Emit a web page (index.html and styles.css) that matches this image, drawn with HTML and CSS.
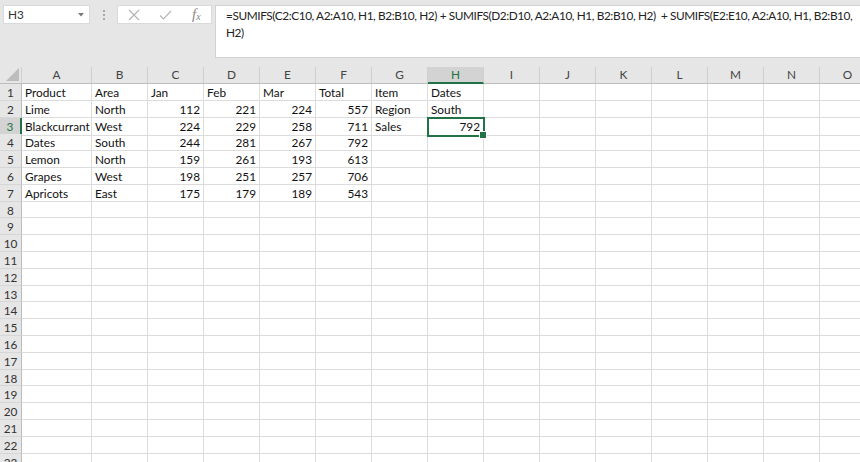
FILE: index.html
```html
<!DOCTYPE html>
<html>
<head>
<meta charset="utf-8">
<link rel="stylesheet" href="styles.css">
</head>
<body>
<div class="top">
  <div class="namebox"><span>H3</span><svg class="dd" width="6" height="4" viewBox="0 0 6 4"><path d="M0 0H6L3 3.5Z" fill="#7a7a7a"/></svg></div>
  <div class="grip"><i></i><i></i><i></i></div>
  <div class="fxbox">
    <svg class="ic" width="12" height="12" viewBox="0 0 12 12"><path d="M1 1L11 11M11 1L1 11" stroke="#b3b3b3" stroke-width="1.1" fill="none"/></svg>
    <svg class="ic" width="13" height="12" viewBox="0 0 13 12"><path d="M1 6.5L4.5 10L12 2" stroke="#b3b3b3" stroke-width="1.1" fill="none"/></svg>
    <span class="fx">f<sub>x</sub></span>
  </div>
  <div class="fbar">=SUMIFS(C2:C10, A2:A10, H1, B2:B10, H2) + SUMIFS(D2:D10, A2:A10, H1, B2:B10, H2)  + SUMIFS(E2:E10, A2:A10, H1, B2:B10, H2)</div>
</div>
<div class="sheet">
  <div class="r hdr"><div class="corner"><svg width="13" height="13" viewBox="0 0 13 13"><path d="M13 0V13H0Z" fill="#bdbdbd"/></svg></div><div>A</div><div>B</div><div>C</div><div>D</div><div>E</div><div>F</div><div>G</div><div class="csel">H</div><div>I</div><div>J</div><div>K</div><div>L</div><div>M</div><div>N</div><div>O</div></div>
  <div class="r"><div class="rh">1</div><div>Product</div><div>Area</div><div>Jan</div><div>Feb</div><div>Mar</div><div>Total</div><div>Item</div><div>Dates</div><div></div><div></div><div></div><div></div><div></div><div></div><div></div></div>
  <div class="r"><div class="rh">2</div><div>Lime</div><div>North</div><div class="n">112</div><div class="n">221</div><div class="n">224</div><div class="n">557</div><div>Region</div><div>South</div><div></div><div></div><div></div><div></div><div></div><div></div><div></div></div>
  <div class="r"><div class="rh rsel">3</div><div>Blackcurrant</div><div>West</div><div class="n">224</div><div class="n">229</div><div class="n">258</div><div class="n">711</div><div>Sales</div><div class="n sel">792</div><div></div><div></div><div></div><div></div><div></div><div></div><div></div></div>
  <div class="r"><div class="rh">4</div><div>Dates</div><div>South</div><div class="n">244</div><div class="n">281</div><div class="n">267</div><div class="n">792</div><div></div><div></div><div></div><div></div><div></div><div></div><div></div><div></div><div></div></div>
  <div class="r"><div class="rh">5</div><div>Lemon</div><div>North</div><div class="n">159</div><div class="n">261</div><div class="n">193</div><div class="n">613</div><div></div><div></div><div></div><div></div><div></div><div></div><div></div><div></div><div></div></div>
  <div class="r"><div class="rh">6</div><div>Grapes</div><div>West</div><div class="n">198</div><div class="n">251</div><div class="n">257</div><div class="n">706</div><div></div><div></div><div></div><div></div><div></div><div></div><div></div><div></div><div></div></div>
  <div class="r"><div class="rh">7</div><div>Apricots</div><div>East</div><div class="n">175</div><div class="n">179</div><div class="n">189</div><div class="n">543</div><div></div><div></div><div></div><div></div><div></div><div></div><div></div><div></div><div></div></div>
  <div class="r"><div class="rh">8</div><div></div><div></div><div></div><div></div><div></div><div></div><div></div><div></div><div></div><div></div><div></div><div></div><div></div><div></div><div></div></div>
  <div class="r"><div class="rh">9</div><div></div><div></div><div></div><div></div><div></div><div></div><div></div><div></div><div></div><div></div><div></div><div></div><div></div><div></div><div></div></div>
  <div class="r"><div class="rh">10</div><div></div><div></div><div></div><div></div><div></div><div></div><div></div><div></div><div></div><div></div><div></div><div></div><div></div><div></div><div></div></div>
  <div class="r"><div class="rh">11</div><div></div><div></div><div></div><div></div><div></div><div></div><div></div><div></div><div></div><div></div><div></div><div></div><div></div><div></div><div></div></div>
  <div class="r"><div class="rh">12</div><div></div><div></div><div></div><div></div><div></div><div></div><div></div><div></div><div></div><div></div><div></div><div></div><div></div><div></div><div></div></div>
  <div class="r"><div class="rh">13</div><div></div><div></div><div></div><div></div><div></div><div></div><div></div><div></div><div></div><div></div><div></div><div></div><div></div><div></div><div></div></div>
  <div class="r"><div class="rh">14</div><div></div><div></div><div></div><div></div><div></div><div></div><div></div><div></div><div></div><div></div><div></div><div></div><div></div><div></div><div></div></div>
  <div class="r"><div class="rh">15</div><div></div><div></div><div></div><div></div><div></div><div></div><div></div><div></div><div></div><div></div><div></div><div></div><div></div><div></div><div></div></div>
  <div class="r"><div class="rh">16</div><div></div><div></div><div></div><div></div><div></div><div></div><div></div><div></div><div></div><div></div><div></div><div></div><div></div><div></div><div></div></div>
  <div class="r"><div class="rh">17</div><div></div><div></div><div></div><div></div><div></div><div></div><div></div><div></div><div></div><div></div><div></div><div></div><div></div><div></div><div></div></div>
  <div class="r"><div class="rh">18</div><div></div><div></div><div></div><div></div><div></div><div></div><div></div><div></div><div></div><div></div><div></div><div></div><div></div><div></div><div></div></div>
  <div class="r"><div class="rh">19</div><div></div><div></div><div></div><div></div><div></div><div></div><div></div><div></div><div></div><div></div><div></div><div></div><div></div><div></div><div></div></div>
  <div class="r"><div class="rh">20</div><div></div><div></div><div></div><div></div><div></div><div></div><div></div><div></div><div></div><div></div><div></div><div></div><div></div><div></div><div></div></div>
  <div class="r"><div class="rh">21</div><div></div><div></div><div></div><div></div><div></div><div></div><div></div><div></div><div></div><div></div><div></div><div></div><div></div><div></div><div></div></div>
  <div class="r"><div class="rh">22</div><div></div><div></div><div></div><div></div><div></div><div></div><div></div><div></div><div></div><div></div><div></div><div></div><div></div><div></div><div></div></div>
  <div class="r"><div class="rh">23</div><div></div><div></div><div></div><div></div><div></div><div></div><div></div><div></div><div></div><div></div><div></div><div></div><div></div><div></div><div></div></div>
</div>
</body>
</html>
```

FILE: styles.css
```css
* { box-sizing: border-box; margin: 0; padding: 0; }
html, body { width: 860px; height: 462px; overflow: hidden; background: #fff; }
body { font-family: Lato, "Liberation Sans", sans-serif; font-size: 11.8px; color: #111; }

.top { display: flex; align-items: flex-start; height: 67px; padding: 5px 0 0 3px; background: #e6e6e6; }
.namebox { flex: none; width: 87px; height: 19px; background: #fff; border: 1px solid #dadada; display: flex; align-items: center; justify-content: space-between; padding: 0 5px 0 4px; color: #333; }
.dd { display: block; }
.grip { flex: none; width: 27px; display: flex; flex-direction: column; align-items: center; gap: 2px; padding-top: 5px; }
.grip i { display: block; width: 2px; height: 2px; background: #a9a9a9; }
.fxbox { flex: none; width: 95px; height: 19px; background: #fff; border: 1px solid #dadada; display: flex; align-items: center; gap: 19px; padding-left: 10px; }
.ic { display: block; }
.fx { font-family: "Liberation Serif", serif; font-style: italic; font-size: 15px; color: #8a8a8a; line-height: 1; margin-left: 1px; }
.fx sub { font-size: 10px; vertical-align: -1px; }
.fbar { flex: 1; height: 53px; margin-left: 3px; margin-right: -2px; background: #fff; border: 1px solid #d2d2d2; padding: 1px 4px 0 10px; line-height: 17px; color: #222; white-space: pre-wrap; letter-spacing: -0.4px; }

.sheet { overflow: hidden; }
.r { display: grid; grid-template-columns: 22px 70px repeat(14, 56px); height: 16.8px; }
.r > div { border-right: 1px solid #dcdcdc; border-bottom: 1px solid #dcdcdc; padding: 0 3px; line-height: 17.4px; white-space: nowrap; overflow: hidden; }
.r > .n { text-align: right; }
.r > .rh { background: #e6e6e6; border-right-color: #bcbcbc; border-bottom-color: #d6d6d6; text-align: center; padding: 0; color: #333; }
.r > .rsel { background: #d3d3d3; color: #217346; border-right: 2px solid #217346; }
.hdr { height: 17px; background: #e6e6e6; }
.hdr > div { text-align: center; color: #444; border-right-color: #cfcfcf; border-bottom-color: #bcbcbc; line-height: 16px; }
.hdr > .corner { display: flex; align-items: flex-end; justify-content: flex-end; padding: 0 2px 2px 0; }
.corner svg { display: block; }
.hdr > .csel { background: #d3d3d3; color: #217346; border-bottom: 2px solid #217346; }
.r > .sel { position: relative; overflow: visible; outline: 2px solid #217346; outline-offset: -1px; z-index: 1; }
.sel::after { content: ""; position: absolute; right: -4px; bottom: -4px; width: 6px; height: 6px; background: #217346; border: 1px solid #fff; }
```
